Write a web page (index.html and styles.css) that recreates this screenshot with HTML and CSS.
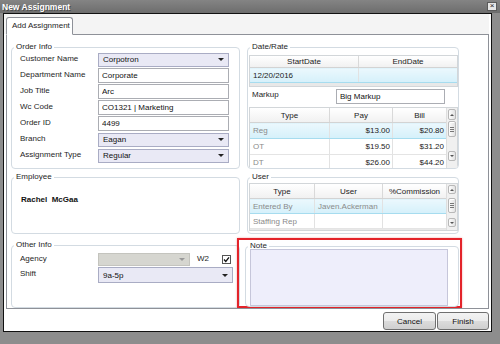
FILE: index.html
```html
<!DOCTYPE html>
<html lang="en">
<head>
    <meta charset="UTF-8">
    <title>New Assignment</title>
    <link rel="stylesheet" href="styles.css">
</head>
<body>
    <div class="window">
        <div class="titlebar">
            <span class="title">New Assignment</span>
            <span class="close">×</span>
        </div>
        <div class="client">
            <div class="tabs">
                <div class="tab">Add Assignment</div>
            </div>
            <div class="tab-panel">
                <div class="layout">
                    <!-- Order info -->
                    <fieldset class="group">
                        <legend>Order Info</legend>
                        <div class="form-grid order-grid">
                            <label>Customer Name</label>
                            <div class="combo">Corpotron<span class="arrow"></span></div>
                            <label>Department Name</label>
                            <input class="text" type="text" value="Corporate">
                            <label>Job Title</label>
                            <input class="text" type="text" value="Arc">
                            <label>Wc Code</label>
                            <input class="text" type="text" value="CO1321 | Marketing">
                            <label>Order ID</label>
                            <input class="text" type="text" value="4499">
                            <label>Branch</label>
                            <div class="combo">Eagan<span class="arrow"></span></div>
                            <label>Assignment Type</label>
                            <div class="combo">Regular<span class="arrow"></span></div>
                        </div>
                    </fieldset>

                    <!-- Date / rate -->
                    <fieldset class="group clip">
                        <legend>Date/Rate</legend>
                        <div class="grid-box date-box">
                            <table class="grid">
                                <thead>
                                    <tr><th style="width:108px">StartDate</th><th>EndDate</th></tr>
                                </thead>
                                <tbody>
                                    <tr class="selected"><td>12/20/2016</td><td></td></tr>
                                </tbody>
                            </table>
                        </div>
                        <div class="markup">
                            <label>Markup</label>
                            <input class="text" type="text" value="Big Markup">
                        </div>
                        <div class="grid-box rate-box">
                            <table class="grid">
                                <thead>
                                    <tr><th style="width:79px">Type</th><th style="width:62px">Pay</th><th>Bill</th></tr>
                                </thead>
                                <tbody>
                                    <tr class="selected"><td class="muted">Reg</td><td class="num">$13.00</td><td class="num">$20.80</td></tr>
                                    <tr><td class="muted">OT</td><td class="num">$19.50</td><td class="num">$31.20</td></tr>
                                    <tr><td class="muted">DT</td><td class="num">$26.00</td><td class="num">$44.20</td></tr>
                                </tbody>
                            </table>
                            <div class="scrollbar rate-scroll">
                                <div class="sb-btn"><span class="up"></span></div>
                                <div class="sb-thumb"></div>
                                <div class="sb-btn down-btn"><span class="down"></span></div>
                            </div>
                        </div>
                    </fieldset>

                    <!-- Employee -->
                    <fieldset class="group row-two">
                        <legend>Employee</legend>
                        <div class="employee-name">Rachel&nbsp; McGaa</div>
                    </fieldset>

                    <!-- User -->
                    <fieldset class="group row-two">
                        <legend>User</legend>
                        <div class="grid-box user-box">
                            <table class="grid">
                                <thead>
                                    <tr><th style="width:64px">Type</th><th style="width:67px">User</th><th>%Commission</th></tr>
                                </thead>
                                <tbody>
                                    <tr class="selected"><td class="muted">Entered By</td><td class="muted">Javen.Ackerman</td><td></td></tr>
                                    <tr><td class="muted">Staffing Rep</td><td></td><td></td></tr>
                                </tbody>
                            </table>
                            <div class="scrollbar user-scroll">
                                <div class="sb-btn"><span class="up"></span></div>
                                <div class="sb-thumb"></div>
                                <div class="sb-btn down-btn"><span class="down"></span></div>
                            </div>
                        </div>
                    </fieldset>

                    <!-- Other info -->
                    <fieldset class="group">
                        <legend>Other Info</legend>
                        <div class="form-grid other-grid">
                            <label>Agency</label>
                            <div class="combo disabled"><span class="arrow"></span></div>
                            <span class="w2">W2</span>
                            <span class="check">
                                <svg width="9" height="9" viewBox="0 0 9 9"><rect x="0.5" y="0.5" width="8" height="8" fill="#fff" stroke="#555"/><path d="M2 4.5 L3.8 6.5 L7 2.3" fill="none" stroke="#111" stroke-width="1.3"/></svg>
                            </span>
                            <label>Shift</label>
                            <div class="combo shift">9a-5p<span class="arrow"></span></div>
                        </div>
                    </fieldset>

                    <!-- Note -->
                    <div class="note-highlight">
                        <fieldset class="group note">
                            <legend>Note</legend>
                            <textarea class="note-text"></textarea>
                        </fieldset>
                    </div>
                </div>
            </div>
            <div class="buttons">
                <button class="btn cancel">Cancel</button>
                <button class="btn">Finish</button>
            </div>
        </div>
    </div>
</body>
</html>
```

FILE: styles.css
```css
body {
    margin: 0;
    background-color: #8d8d8d;
    font-family: "Liberation Sans", Arial, sans-serif;
    font-size: 8px;
    color: #1e1e1e;
}
.window {
    width: 500px;
    height: 344px;
}
.titlebar {
    height: 13px;
    box-sizing: border-box;
    padding: 0 3px 0 2px;
    background: linear-gradient(#848484, #6d6d6d);
    display: flex;
    align-items: center;
    justify-content: space-between;
}
.title {
    color: #fff;
    font-weight: bold;
    font-size: 8.5px;
    text-shadow: 1px 1px 0 #4a4a4a;
}
.close {
    width: 8px;
    height: 7px;
    border: 1px solid #5a5a5a;
    background-color: #e6e6e6;
    font-size: 8px;
    line-height: 6px;
    text-align: center;
    color: #222;
}
.client {
    margin-left: 3px;
    width: 489px;
    height: 319px;
    box-sizing: border-box;
    border: 1px solid #111;
    background-color: #fff;
}
.tabs {
    height: 20px;
    box-sizing: border-box;
    margin-right: 2px;
    padding: 3px 0 0 2px;
    background-color: #f4f4f4;
    display: flex;
}
.tab {
    position: relative;
    z-index: 1;
    width: 67px;
    height: 18px;
    box-sizing: border-box;
    padding-left: 5px;
    border: 1px solid #8e9198;
    border-bottom-color: #fff;
    border-radius: 3px 3px 0 0;
    background-color: #fff;
    line-height: 15px;
}
.tab-panel {
    margin: 0 2px;
    height: 275px;
    box-sizing: border-box;
    border: 1px solid #8e9198;
    background-color: #fff;
    overflow: hidden;
}
.layout {
    display: grid;
    grid-template-columns: 229px 212px;
    grid-template-rows: 127px 65px 68px;
    column-gap: 7px;
    row-gap: 3px;
    padding: 7px 0 0 4px;
}
.group {
    margin: 0;
    padding: 0;
    min-width: 0;
    border: 1px solid #d3dbe2;
    border-radius: 4px;
}
.group legend {
    margin-left: 2px;
    padding: 0 2px;
    line-height: 10px;
}
.clip {
    overflow: hidden;
}
.row-two {
    margin-bottom: 3px;
}

/* form rows */
.form-grid {
    display: grid;
    align-items: center;
    padding-left: 8px;
}
.order-grid {
    grid-template-columns: 78px 131px;
    grid-auto-rows: 15px;
    row-gap: 1px;
}
.form-grid label {
    line-height: 10px;
    margin-top: -2px;
}
.text {
    height: 15px;
    box-sizing: border-box;
    margin: 0;
    padding: 0 3px;
    border: 1px solid #abadb3;
    font-family: inherit;
    font-size: 8px;
    color: #111;
    width: 100%;
}
.combo {
    height: 14px;
    box-sizing: border-box;
    padding: 0 4px;
    border: 1px solid #a9acc4;
    background-color: #e9e9f5;
    display: flex;
    align-items: center;
    justify-content: space-between;
    color: #111;
}
.arrow {
    margin-left: auto;
    width: 0;
    height: 0;
    border-left: 3px solid transparent;
    border-right: 3px solid transparent;
    border-top: 3px solid #222;
}
.combo.disabled {
    height: 13px;
    border-color: #c4c4be;
    background-color: #d6d6d0;
}
.combo.disabled .arrow {
    border-top-color: #999;
}

/* grids */
.grid-box {
    margin-left: 1px;
    border: 1px solid #d2d6d9;
    background-color: #e8e8e8;
    display: flex;
    align-items: flex-start;
}
.grid {
    border-collapse: collapse;
    flex: 1;
    background-color: #fff;
}
.grid th {
    height: 14px;
    padding: 0;
    font-weight: normal;
    color: #222;
    background: linear-gradient(#fff, #f1f1f1);
    border-right: 1px solid #d9d9d9;
    border-bottom: 1px solid #d3d3d3;
}
.grid td {
    height: 15px;
    padding: 0 3px;
    border-right: 1px solid #e2e2e2;
    border-bottom: 1px solid #e4e4e4;
    color: #222;
}
.grid th:last-child,
.grid td:last-child {
    border-right: none;
}
.grid tr.selected td {
    background: linear-gradient(#ebf8fd, #d5f0fa);
    border-top: 1px solid #a6dcef;
    border-bottom: 1px solid #a6dcef;
}
.grid .muted {
    color: #8a8a8a;
}
.grid .num {
    text-align: right;
    padding-right: 2px;
}
.date-box {
    margin-top: 3px;
    height: 32px;
    box-sizing: border-box;
}
.date-box th {
    height: 11px;
}
.date-box td {
    height: 14px;
}
.markup {
    display: flex;
    align-items: center;
    margin-top: 2px;
    padding-left: 4px;
}
.markup label {
    width: 84px;
    margin-top: -4px;
}
.markup .text {
    width: 109px;
}
.rate-box {
    margin-top: 3px;
    height: 64px;
}
.user-box {
    margin-top: 1px;
    height: 48px;
    box-sizing: border-box;
}
.user-box td {
    height: 14px;
}

/* scrollbars */
.scrollbar {
    width: 10px;
    align-self: stretch;
    border-left: 1px solid #dedede;
    background-color: #f0f0f0;
    display: flex;
    flex-direction: column;
    align-items: center;
}
.sb-btn,
.sb-thumb {
    width: 8px;
    box-sizing: border-box;
    border: 1px solid #b8b8b8;
    border-radius: 2px;
    background: linear-gradient(90deg, #fdfdfd, #e2e2e2);
    display: flex;
    align-items: center;
    justify-content: center;
}
.sb-btn {
    height: 11px;
    margin-top: 1px;
}
.sb-thumb {
    height: 16px;
    margin-top: 1px;
    background: linear-gradient(90deg, #fdfdfd, #e2e2e2);
    box-shadow: inset 0 6px 0 -5px #fff;
}
.sb-thumb::after {
    content: "";
    width: 4px;
    height: 5px;
    border-top: 1px solid #777;
    border-bottom: 1px solid #777;
    box-sizing: border-box;
    background: linear-gradient(#777, #777) center / 4px 1px no-repeat;
}
.rate-scroll .down-btn {
    margin-top: 14px;
    height: 10px;
}
.user-scroll .sb-btn {
    height: 9px;
}
.user-scroll .sb-thumb {
    margin-top: 4px;
    height: 15px;
}
.user-scroll .down-btn {
    margin-top: 5px;
}
.up,
.down {
    width: 0;
    height: 0;
    border-left: 2px solid transparent;
    border-right: 2px solid transparent;
}
.up {
    border-bottom: 2px solid #555;
}
.down {
    border-top: 2px solid #555;
}

/* employee */
.employee-name {
    padding: 13px 0 0 9px;
    font-weight: bold;
    color: #111;
}

/* other info */
.other-grid {
    grid-template-columns: 78px 92px 32px 11px;
    grid-template-rows: 13px 16px;
    row-gap: 1px;
    margin-top: 3px;
}
.w2 {
    padding-left: 7px;
    margin-top: -2px;
}
.check {
    height: 9px;
    line-height: 0;
}
.combo.shift {
    grid-column: 2 / -1;
    height: 16px;
}

/* note */
.note-highlight {
    margin: -2px -3px 0 -10px;
    padding: 1px 1px 0 6px;
    border: 2px solid #e3232a;
    box-shadow: 0 0 2px rgba(227, 35, 42, 0.4);
    min-height: 0;
}
.note {
    height: 66px;
    box-sizing: border-box;
}
.note-text {
    display: block;
    margin: -2px 0 0 4px;
    width: 198px;
    height: 57px;
    box-sizing: border-box;
    border: 1px solid #c6c6da;
    background-color: #eeeefb;
    resize: none;
}

/* buttons */
.buttons {
    display: flex;
    justify-content: flex-end;
    gap: 1px;
    margin: 3px 2px 0 0;
}
.btn {
    width: 52px;
    height: 18px;
    padding: 0;
    border: 1px solid #707070;
    border-radius: 3px;
    background: linear-gradient(#f3f3f3, #ebebeb 50%, #dcdcdc 50%, #cfcfcf);
    font-family: inherit;
    font-size: 8px;
    color: #111;
}
.btn.cancel {
    width: 53px;
}
```
